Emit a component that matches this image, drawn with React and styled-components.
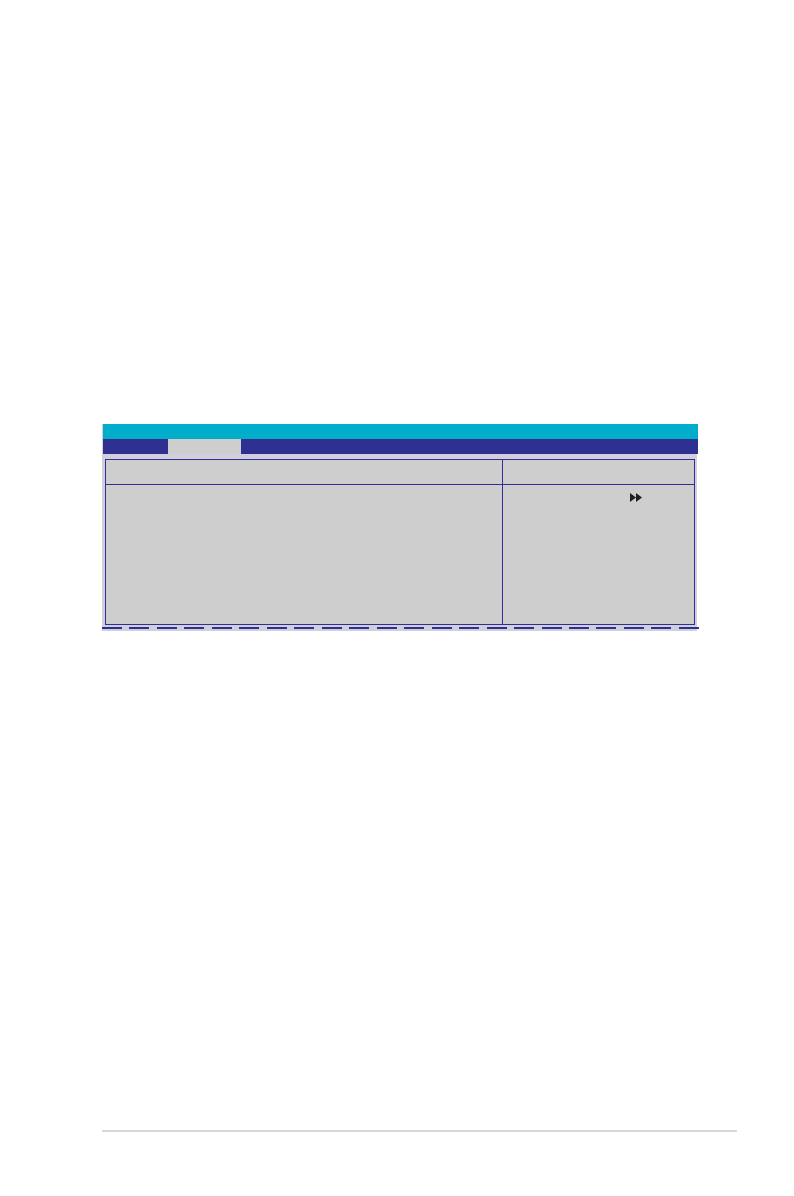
import React from 'react';
import styled, { createGlobalStyle } from 'styled-components';

// ********************** STYLED COMPONENTS ********************************

const GlobalStyle = createGlobalStyle`
* {
    box-sizing: border-box;
}

body {
    margin: 0;
    background-color: white;
    font-family: "Liberation Sans", Arial, sans-serif;
}
`;

const Page = styled.div`
display: flex;
flex-direction: column;
min-height: 100vh;
padding: 424px 57px 64px 102px;
`;

const Screen = styled.main`
display: flex;
flex-direction: column;
margin-right: 40px;
padding-bottom: 2px;
background-color: #d0cfdb;
`;

// the bars hang one pixel past the right edge of the screen
const TitleBar = styled.header`
height: 15px;
margin: 0 -1px 0 1px;
background-color: #00aecb;
`;

const MenuBar = styled.nav`
display: flex;
height: 15px;
margin: 0 -1px 0 1px;
padding-left: 65px;
background-color: #2e3092;
`;

const ActiveTab = styled.div`
width: 73px;
background-color: #cecece;
`;

const Frame = styled.div`
display: grid;
grid-template-columns: 396fr 191fr;
grid-template-rows: 24px 139px;
gap: 1px;
margin: 5px 2px 2px 3px;
border: 1px solid #2e3092;
background-color: #2e3092;
`;

const Cell = styled.section`
padding: 8px 52px;
background-color: #cecece;
`;

const HelpCell = styled(Cell)`
display: flex;
align-items: flex-start;
justify-content: flex-end;
`;

const DashRow = styled.div`
display: flex;
justify-content: space-between;
margin-right: -2px;
`;

const Dash = styled.span`
width: 20px;
height: 2px;
background-color: #2e3092;
`;

const FooterRule = styled.hr`
width: 100%;
height: 2px;
margin: auto 0 0;
border: 0;
background-color: #d8d8d8;
`;

// ********************** STYLED COMPONENTS END ********************************

const DASHES = 22;

const DoubleArrow = () => (
    <svg width='12' height='9' viewBox='0 0 12 9' aria-hidden='true'>
        <path d='M0 0L6 4.5L0 9ZM6 0L12 4.5L6 9Z' fill='#231f20' />
    </svg>
);

const App = () => {
    return (
        <>
            <GlobalStyle />
            <Page>
                <Screen>
                    <TitleBar />
                    <MenuBar>
                        <ActiveTab />
                    </MenuBar>
                    <Frame>
                        <Cell />
                        <Cell />
                        <Cell />
                        <HelpCell>
                            <DoubleArrow />
                        </HelpCell>
                    </Frame>
                    <DashRow>
                        {Array.from({ length: DASHES }, (_, i) => <Dash key={i} />)}
                    </DashRow>
                </Screen>
                <FooterRule />
            </Page>
        </>
    );
};

export default App;
